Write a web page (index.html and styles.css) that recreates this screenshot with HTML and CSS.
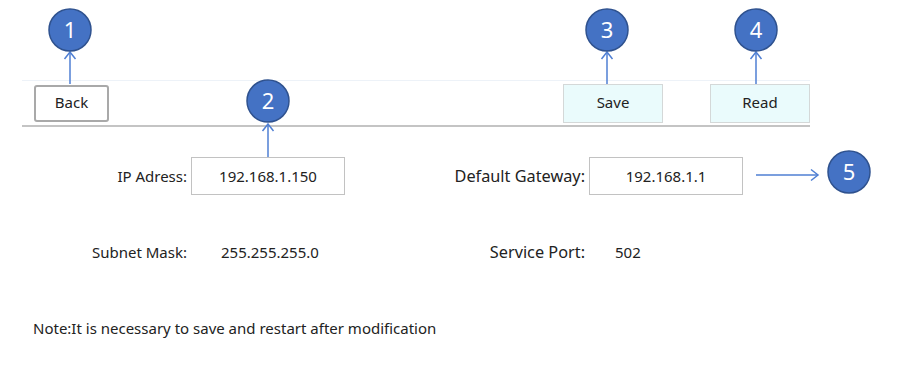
FILE: index.html
```html
<!DOCTYPE html>
<html lang="en">
<head>
    <meta charset="UTF-8">
    <title>Network Settings</title>
    <link rel="stylesheet" href="styles.css">
</head>
<body>
    <div class="page">
        <div class="toolbar">
            <button class="btn btn-back">Back</button>
            <div class="actions">
                <button class="btn btn-action">Save</button>
                <button class="btn btn-action">Read</button>
            </div>
        </div>

        <div class="form">
            <label class="label">IP Adress:</label>
            <div class="field">192.168.1.150</div>
            <label class="label label-wide">Default Gateway:</label>
            <div class="field">192.168.1.1</div>

            <span class="label">Subnet Mask:</span>
            <span class="value">255.255.255.0</span>
            <span class="label label-wide">Service Port:</span>
            <span class="value value-port">502</span>
        </div>

        <p class="note">Note:It is necessary to save and restart after modification</p>

        <!-- callout annotations -->
        <svg class="callouts" width="899" height="382" viewBox="0 0 899 382">
            <g class="arrow">
                <line x1="70" y1="52" x2="70" y2="84"/>
                <polyline points="64.5,59 70,52 75.5,59"/>
                <line x1="268" y1="124" x2="268" y2="157"/>
                <polyline points="262.5,131 268,124 273.5,131"/>
                <line x1="607" y1="52" x2="607" y2="84"/>
                <polyline points="601.5,59 607,52 612.5,59"/>
                <line x1="756" y1="52" x2="756" y2="84"/>
                <polyline points="750.5,59 756,52 761.5,59"/>
                <line x1="756" y1="175" x2="818" y2="175"/>
                <polyline points="811,169.5 818,175 811,180.5"/>
            </g>
            <g class="badge">
                <circle cx="70" cy="30" r="21"/>
                <text x="70" y="38">1</text>
                <circle cx="268" cy="101" r="21"/>
                <text x="268" y="109">2</text>
                <circle cx="607" cy="30" r="21"/>
                <text x="607" y="38">3</text>
                <circle cx="756" cy="30" r="21"/>
                <text x="756" y="38">4</text>
                <circle cx="849" cy="172" r="21"/>
                <text x="849" y="180">5</text>
            </g>
        </svg>
    </div>
</body>
</html>
```

FILE: styles.css
```css
body {
    margin: 0;
    background: #fff;
    color: #222;
    font-family: "Noto Sans", "Open Sans", sans-serif;
    font-size: 15px;
}

.page {
    position: relative;
    width: 899px;
    height: 382px;
    overflow: hidden;
}

.toolbar {
    display: flex;
    justify-content: space-between;
    align-items: center;
    width: 788px;
    height: 44px;
    margin: 80px 0 0 22px;
    border-top: 1px solid #edf2f8;
    border-bottom: 2px solid #c4c4c4;
}

.actions {
    display: flex;
    gap: 47px;
}

.btn {
    font-family: inherit;
    font-size: 15px;
    color: #222;
    cursor: pointer;
    padding: 0 0 3px;
}

.btn-back {
    width: 75px;
    height: 37px;
    margin-left: 12px;
    background: #fff;
    border: 2px solid #a9a9a9;
    border-radius: 3px;
}

.btn-action {
    width: 100px;
    height: 39px;
    background: #eafbfc;
    border: 1px solid #d4d8d8;
}

.form {
    display: grid;
    grid-template-columns: 165px 154px 236px 154px;
    grid-template-rows: 38px 20px;
    column-gap: 4px;
    row-gap: 47px;
    align-items: center;
    margin: 30px 0 0 22px;
}

.label {
    text-align: right;
    white-space: nowrap;
}

.label-wide {
    font-size: 16.3px;
}

.field {
    height: 36px;
    line-height: 36px;
    text-align: center;
    border: 1px solid #c2c2c2;
}

.value {
    padding-left: 30px;
}

.value-port {
    padding-left: 26px;
}

.note {
    margin: 56px 0 0 33px;
}

.callouts {
    position: absolute;
    top: 0;
    left: 0;
    pointer-events: none;
}

.arrow line,
.arrow polyline {
    fill: none;
    stroke: #4f7fd3;
    stroke-width: 1.5;
}

.badge circle {
    fill: #4472c4;
    stroke: #2f528f;
    stroke-width: 1.5;
}

.badge text {
    fill: #fff;
    font-family: "Noto Sans", sans-serif;
    font-size: 22px;
    text-anchor: middle;
}
```
